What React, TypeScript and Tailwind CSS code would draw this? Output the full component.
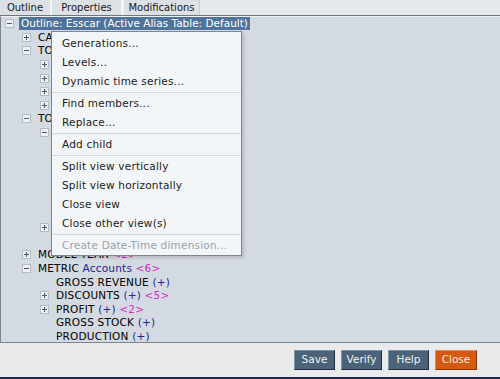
import React from 'react';

type Row = {
  level: number;
  toggle?: '+' | '-';
  name: string;
  alias?: string;
  op?: string;
  count?: string;
};

const indent = ['pl-[4px]', 'pl-[21px]', 'pl-[39px]', 'pl-[57px]'];

const rows: Row[] = [
  { level: 1, toggle: '+', name: 'CALENDAR', alias: 'Time', count: '<3>' },
  { level: 1, toggle: '-', name: 'TOTAL MARKETS', count: '<4>' },
  { level: 2, toggle: '+', name: 'EAST', count: '<3>' },
  { level: 2, toggle: '+', name: 'WEST', count: '<4>' },
  { level: 2, toggle: '+', name: 'SOUTH', count: '<3>' },
  { level: 2, toggle: '+', name: 'CENTRAL', count: '<3>' },
  { level: 1, toggle: '-', name: 'TOTAL PRODUCTS', count: '<2>' },
  { level: 2, toggle: '-', name: 'CARS', count: '<6>' },
  { level: 3, toggle: '+', name: 'SEDAN', count: '<2>' },
  { level: 3, toggle: '+', name: 'COUPE', count: '<2>' },
  { level: 3, toggle: '+', name: 'WAGON', count: '<2>' },
  { level: 3, toggle: '+', name: 'SUV', count: '<2>' },
  { level: 3, toggle: '+', name: 'VAN', count: '<2>' },
  { level: 3, toggle: '+', name: 'TRUCK', count: '<2>' },
  { level: 2, toggle: '+', name: 'PARTS', count: '<3>' },
  { level: 2, name: 'SERVICE' },
  { level: 1, toggle: '+', name: 'MODEL YEAR', count: '<2>' },
  { level: 1, toggle: '-', name: 'METRIC', alias: 'Accounts', count: '<6>' },
  { level: 2, name: 'GROSS REVENUE', op: '(+)' },
  { level: 2, toggle: '+', name: 'DISCOUNTS', op: '(+)', count: '<5>' },
  { level: 2, toggle: '+', name: 'PROFIT', op: '(+)', count: '<2>' },
  { level: 2, name: 'GROSS STOCK', op: '(+)' },
  { level: 2, name: 'PRODUCTION', op: '(+)' },
];

type MenuEntry = { label: string; disabled?: boolean } | 'sep';

const menu: MenuEntry[] = [
  { label: 'Generations...' },
  { label: 'Levels...' },
  { label: 'Dynamic time series...' },
  'sep',
  { label: 'Find members...' },
  { label: 'Replace...' },
  'sep',
  { label: 'Add child' },
  'sep',
  { label: 'Split view vertically' },
  { label: 'Split view horizontally' },
  { label: 'Close view' },
  { label: 'Close other view(s)' },
  'sep',
  { label: 'Create Date-Time dimension...', disabled: true },
];

function Toggle({ sign }: { sign?: '+' | '-' }) {
  if (!sign) return <span className="w-[9px] h-[9px] shrink-0" />;
  return (
    <span className="relative w-[9px] h-[9px] shrink-0 border border-[#b4bbc3] bg-[#eef1f4]">
      <span className="absolute left-[1px] top-[3px] w-[5px] h-px bg-[#505860]" />
      {sign === '+' && <span className="absolute left-[3px] top-[1px] w-px h-[5px] bg-[#505860]" />}
    </span>
  );
}

function Button({ label, orange }: { label: string; orange?: boolean }) {
  return (
    <button
      className={
        orange
          ? 'h-[20px] w-[42px] border border-[#8a3a08] border-t-[#e88a50] border-l-[#e88a50] bg-[#d55a10] text-[10.5px] text-[#fbe6d8]'
          : 'h-[20px] w-[41px] border border-[#1f2f40] border-t-[#7c94aa] border-l-[#7c94aa] bg-[#4b6279] text-[10.5px] text-[#eef2f6]'
      }
    >
      {label}
    </button>
  );
}

export default function App() {
  return (
    <div
      className="relative w-[500px] h-[379px] flex flex-col bg-[#e8eaec] overflow-hidden text-black"
      style={{ fontFamily: '"DejaVu Sans", Verdana, sans-serif' }}
    >
      {/* tabs */}
      <div className="h-[16px] shrink-0 flex border-b border-[#6f757b] bg-[#e6e9ec] text-[10px] leading-[15px] text-[#1a1a1a]">
        <div className="w-[52px] text-center bg-[#dce1e6] border-r-2 border-[#f2f4f6]">Outline</div>
        <div className="w-[72px] text-center bg-[#dce1e6] border-r-[3px] border-[#f2f4f6]">Properties</div>
        <div className="w-[76px] text-center bg-[#dce1e6] border-r border-[#c8cdd2]">Modifications</div>
      </div>

      {/* tree */}
      <div className="h-[327px] shrink-0 border-l border-b border-[#7d848b] border-t border-t-[#eef0f2] bg-[#d4dae1] text-[10.5px] overflow-hidden">
        <div className="h-[13.6px] flex items-center gap-[5px] pl-[4px]">
          <Toggle sign="-" />
          <span className="bg-[#4f739a] text-white px-[2px] leading-[13px] whitespace-nowrap">
            Outline: Esscar (Active Alias Table: Default)
          </span>
        </div>
        {rows.map((r, i) => (
          <div key={i} className={`h-[13.6px] flex items-center gap-[7px] whitespace-nowrap ${indent[r.level]}`}>
            <Toggle sign={r.toggle} />
            <span className="leading-[13px] tracking-[0.2px]">
              {r.name}
              {r.alias && <span className="text-[#22229c]"> {r.alias}</span>}
              {r.op && <span className="text-[#22229c]"> {r.op}</span>}
              {r.count && <span className="text-[#d42ad4]"> {r.count}</span>}
            </span>
          </div>
        ))}
      </div>

      {/* footer */}
      <div className="flex-1 flex items-center justify-end gap-[6px] pr-[23px] border-b-2 border-[#25284c]">
        <Button label="Save" />
        <Button label="Verify" />
        <Button label="Help" />
        <Button label="Close" orange />
      </div>

      {/* context menu */}
      <div className="absolute left-[51px] top-[31px] w-[191px] border border-[#7e858c] bg-[#f3f6f9] pt-[2px] shadow-[2px_2px_3px_rgba(0,0,0,0.15)] text-[10.5px]">
        {menu.map((m, i) =>
          m === 'sep' ? (
            <div key={i} className="my-[1px] h-px bg-[#d3d9df]" />
          ) : (
            <div
              key={i}
              className={`h-[19px] flex items-center pl-[10px] whitespace-nowrap tracking-[0.2px] ${
                m.disabled ? 'text-[#9ca1a7]' : 'text-[#1a1a1a]'
              }`}
            >
              {m.label}
            </div>
          )
        )}
      </div>
    </div>
  );
}
